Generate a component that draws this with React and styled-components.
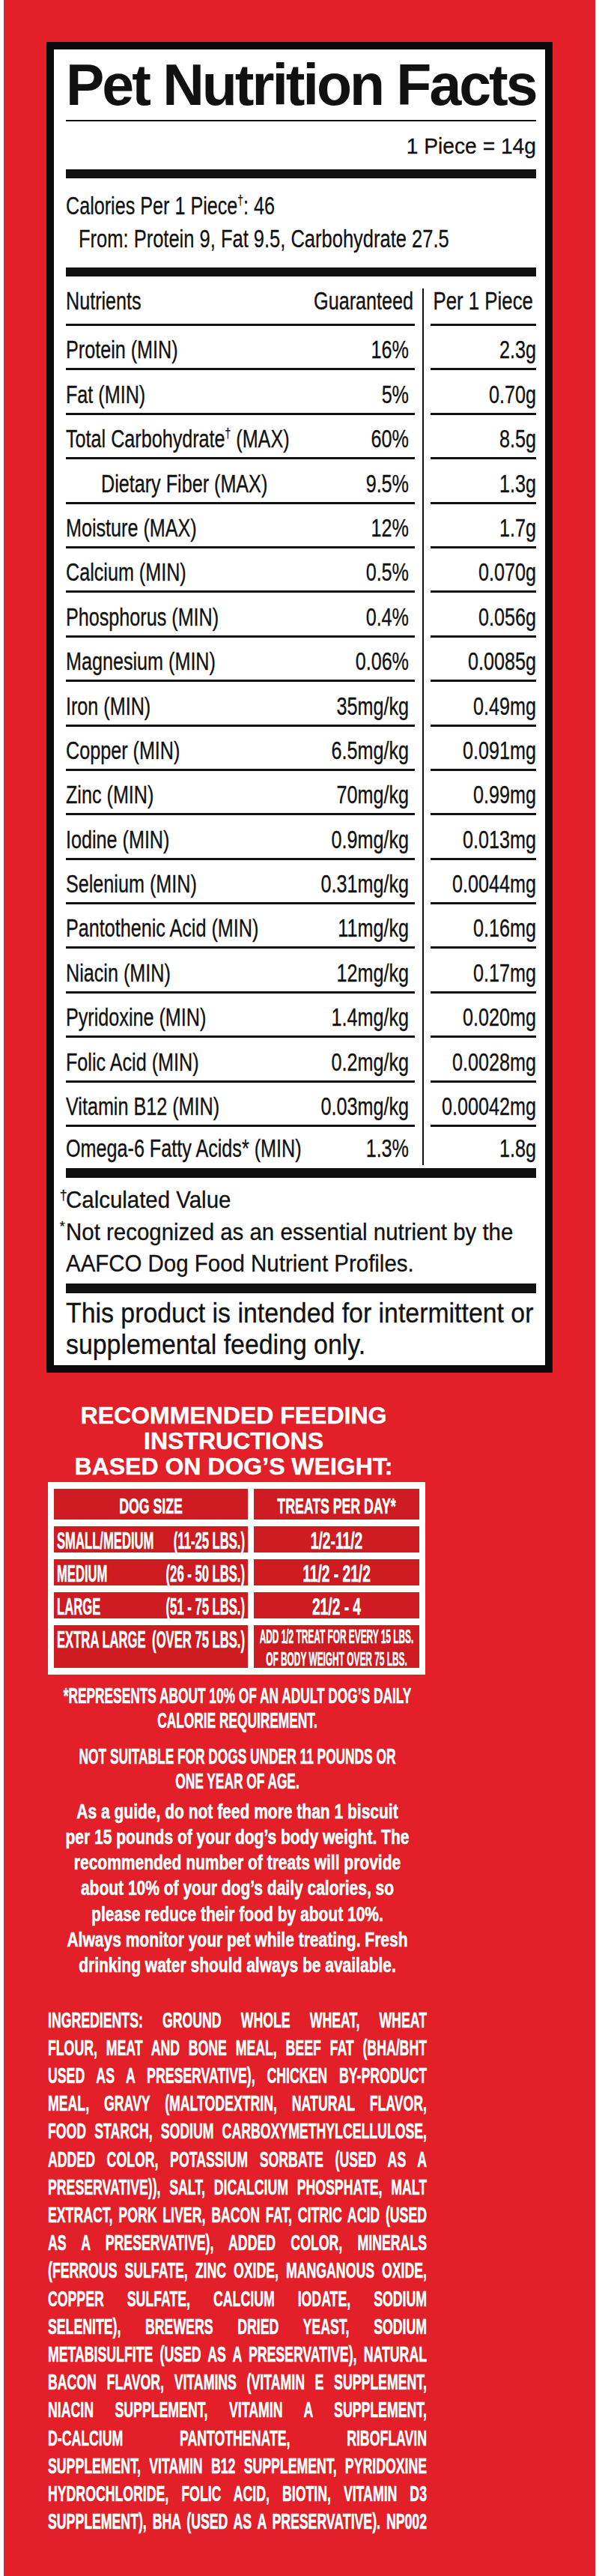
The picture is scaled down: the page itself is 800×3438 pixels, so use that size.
import React from "react";
import styled, { createGlobalStyle } from "styled-components";

const GlobalStyle = createGlobalStyle`
  html, body {
    margin: 0;
    padding: 0;
    background: #fff;
  }
  body {
    font-family: "Liberation Sans", Arial, sans-serif;
  }
`;

const Page = styled.div`
  margin: 0 5px;
  min-height: 3438px;
  box-sizing: border-box;
  padding-top: 56px;
  background: #e3202a;
  overflow: hidden;
`;

const Label = styled.section`
  margin-left: 57px;
  width: 676px;
  box-sizing: border-box;
  border: 10px solid #0b0b0b;
  padding: 9px 12px 6px 16px;
  background: #fff;
  color: #111;
`;

const Title = styled.h1`
  margin: 0;
  font-size: 77px;
  line-height: 77px;
  font-weight: 700;
  letter-spacing: -3px;
  white-space: nowrap;
`;

const Rule = styled.div`
  height: ${p => p.$h}px;
  margin-top: ${p => p.$mt || 0}px;
  background: #111;
`;

// condensed type: the label uses a narrow face, so the text is squeezed
const Fit = styled.div`
  width: ${p => 100 / p.$x}%;
  transform: scaleX(${p => p.$x});
  transform-origin: left center;
  white-space: ${p => (p.$wrap ? "normal" : "nowrap")};
  text-align: ${p => p.$align || "left"};
  text-align-last: ${p => (p.$align === "justify" ? "justify" : "auto")};
`;

const FitRow = styled(Fit)`
  display: flex;
  justify-content: ${p => p.$justify || "space-between"};
  align-items: baseline;
`;

const Line = styled.div`
  margin-top: ${p => p.$mt || 0}px;
  padding-left: ${p => p.$indent || 0}px;
  font-size: ${p => p.$size}px;
  line-height: ${p => p.$lh}px;
  -webkit-text-stroke: 0.3px #111;
`;

const Sup = styled.sup`
  font-size: 0.55em;
  line-height: 0;
  vertical-align: 0.7em;
`;

const Mark = styled.span`
  display: inline-block;
  width: 9px;
  margin-left: -9px;
  font-size: 0.6em;
  line-height: 0;
  vertical-align: 0.6em;
`;

const Row = styled.div`
  display: grid;
  grid-template-columns: 466px 21px 141px;
  height: ${p => p.$h}px;
  font-size: 34px;
  line-height: 34px;
  -webkit-text-stroke: 0.35px #111;
`;

const Cell = styled.div`
  display: flex;
  flex-direction: column;
  justify-content: flex-end;
  box-sizing: border-box;
  padding: 0 ${p => p.$pr || 0}px ${p => p.$pb}px ${p => p.$pl || 0}px;
  border-bottom: ${p => (p.$ruled ? "3px solid #111" : "none")};
`;

const Divider = styled.div`
  background: linear-gradient(#111, #111) no-repeat center ${p => p.$top || 0}px /
    2px calc(100% - ${p => (p.$top || 0) + (p.$bottom || 0)}px);
`;

const Lower = styled.div`
  margin-left: 59px;
  width: 506px;
  color: #fff;
  font-weight: 700;
  text-shadow: 0 0 2px rgba(110, 0, 0, 0.7);
  -webkit-text-stroke: 0.7px #fff;
`;

const Heading = styled.h2`
  margin: 40px 0 0;
  padding-right: 10px;
  font-size: 32px;
  line-height: 34px;
  font-weight: 700;
  text-align: center;
  -webkit-text-stroke: 0.5px #fff;
`;

const FeedTable = styled.div`
  margin-top: 4px;
  width: 504px;
  box-sizing: border-box;
  padding: 9px 8px;
  display: grid;
  grid-template-columns: 259px 221px;
  gap: 9px 8px;
  background: #fff;
`;

const FeedCell = styled.div`
  height: ${p => p.$h}px;
  box-sizing: border-box;
  padding: ${p => p.$pt || 0}px 4px 0;
  background: #cf1b22;
  font-size: ${p => p.$size || 32}px;
  line-height: ${p => p.$lh || 33}px;
`;

const Block = styled.div`
  margin-top: ${p => p.$mt}px;
  font-size: ${p => p.$size}px;
  line-height: ${p => p.$lh}px;
`;

const nutrients = [
  ["Protein (MIN)", "16%", "2.3g"],
  ["Fat (MIN)", "5%", "0.70g"],
  [<>Total Carbohydrate<Sup>†</Sup> (MAX)</>, "60%", "8.5g"],
  ["Dietary Fiber (MAX)", "9.5%", "1.3g", 47],
  ["Moisture (MAX)", "12%", "1.7g"],
  ["Calcium (MIN)", "0.5%", "0.070g"],
  ["Phosphorus (MIN)", "0.4%", "0.056g"],
  ["Magnesium (MIN)", "0.06%", "0.0085g"],
  ["Iron (MIN)", "35mg/kg", "0.49mg"],
  ["Copper (MIN)", "6.5mg/kg", "0.091mg"],
  ["Zinc (MIN)", "70mg/kg", "0.99mg"],
  ["Iodine (MIN)", "0.9mg/kg", "0.013mg"],
  ["Selenium (MIN)", "0.31mg/kg", "0.0044mg"],
  ["Pantothenic Acid (MIN)", "11mg/kg", "0.16mg"],
  ["Niacin (MIN)", "12mg/kg", "0.17mg"],
  ["Pyridoxine (MIN)", "1.4mg/kg", "0.020mg"],
  ["Folic Acid (MIN)", "0.2mg/kg", "0.0028mg"],
  ["Vitamin B12 (MIN)", "0.03mg/kg", "0.00042mg"],
];

const feeding = [
  ["SMALL/MEDIUM", "(11-25 LBS.)", "1/2-11/2"],
  ["MEDIUM", "(26 - 50 LBS.)", "11/2 - 21/2"],
  ["LARGE", "(51 - 75 LBS.)", "21/2 - 4"],
];

const ingredients = [
  "INGREDIENTS: GROUND WHOLE WHEAT, WHEAT",
  "FLOUR, MEAT AND BONE MEAL, BEEF FAT (BHA/BHT",
  "USED AS A PRESERVATIVE), CHICKEN BY-PRODUCT",
  "MEAL, GRAVY (MALTODEXTRIN, NATURAL FLAVOR,",
  "FOOD STARCH, SODIUM CARBOXYMETHYLCELLULOSE,",
  "ADDED COLOR, POTASSIUM SORBATE (USED AS A",
  "PRESERVATIVE)), SALT, DICALCIUM PHOSPHATE, MALT",
  "EXTRACT, PORK LIVER, BACON FAT, CITRIC ACID (USED",
  "AS A PRESERVATIVE), ADDED COLOR, MINERALS",
  "(FERROUS SULFATE, ZINC OXIDE, MANGANOUS OXIDE,",
  "COPPER SULFATE, CALCIUM IODATE, SODIUM",
  "SELENITE), BREWERS DRIED YEAST, SODIUM",
  "METABISULFITE (USED AS A PRESERVATIVE), NATURAL",
  "BACON FLAVOR, VITAMINS (VITAMIN E SUPPLEMENT,",
  "NIACIN SUPPLEMENT, VITAMIN A SUPPLEMENT,",
  "D-CALCIUM PANTOTHENATE, RIBOFLAVIN",
  "SUPPLEMENT, VITAMIN B12 SUPPLEMENT, PYRIDOXINE",
  "HYDROCHLORIDE, FOLIC ACID, BIOTIN, VITAMIN D3",
  "SUPPLEMENT), BHA (USED AS A PRESERVATIVE). NP002",
];

const guide = [
  "As a guide, do not feed more than 1 biscuit",
  "per 15 pounds of your dog’s body weight. The",
  "recommended number of treats will provide",
  "about 10% of your dog’s daily calories, so",
  "please reduce their food by about 10%.",
  "Always monitor your pet while treating. Fresh",
  "drinking water should always be available.",
];

const NutrientRow = ({ name, guaranteed, perPiece, indent, last }) => (
  <Row $h={last ? 55 : 59.4}>
    <Cell $ruled={!last} $pb={last ? 10 : 8} $pr={8} $pl={indent}>
      <FitRow $x={0.74}>
        <span>{name}</span>
        <span>{guaranteed}</span>
      </FitRow>
    </Cell>
    <Divider $bottom={last ? 4 : 0} />
    <Cell $ruled={!last} $pb={last ? 10 : 8}>
      <FitRow $x={0.74} $justify="flex-end">
        <span>{perPiece}</span>
      </FitRow>
    </Cell>
  </Row>
);

const App = () => {
  return (
    <Page>
      <GlobalStyle />
      <Label>
        <Title>Pet Nutrition Facts</Title>
        <Rule $h={2} $mt={8} />
        <Line $size={30} $lh={30} $mt={18}>
          <Fit $x={0.94} $align="right">1 Piece = 14g</Fit>
        </Line>
        <Rule $h={12} $mt={16} />
        <Line $size={34} $lh={34} $mt={19}>
          <Fit $x={0.74}>
            Calories Per 1 Piece<Sup>†</Sup>: 46
          </Fit>
        </Line>
        <Line $size={34} $lh={34} $mt={10} $indent={17}>
          <Fit $x={0.75}>From: Protein 9, Fat 9.5, Carbohydrate 27.5</Fit>
        </Line>
        <Rule $h={12} $mt={22} />

        <Row $h={66}>
          <Cell $ruled $pb={14} $pr={2}>
            <FitRow $x={0.74}>
              <span>Nutrients</span>
              <span>Guaranteed</span>
            </FitRow>
          </Cell>
          <Divider $top={16} />
          <Cell $ruled $pb={14} $pr={4}>
            <FitRow $x={0.76} $justify="flex-end">
              <span>Per 1 Piece</span>
            </FitRow>
          </Cell>
        </Row>
        {nutrients.map(([name, g, v, indent], i) => (
          <NutrientRow key={i} name={name} guaranteed={g} perPiece={v} indent={indent} />
        ))}
        <NutrientRow
          last
          name={<>Omega-6 Fatty Acids* (MIN)</>}
          guaranteed="1.3%"
          perPiece="1.8g"
        />
        <Rule $h={13} />

        <Line $size={32} $lh={42.5} $mt={8}>
          <Fit $x={0.92}>
            <Mark>†</Mark>Calculated Value
          </Fit>
        </Line>
        <Line $size={32} $lh={42.5}>
          <Fit $x={0.92}>
            <Mark>*</Mark>Not recognized as an essential nutrient by the
          </Fit>
        </Line>
        <Line $size={32} $lh={42.5}>
          <Fit $x={0.92}>AAFCO Dog Food Nutrient Profiles.</Fit>
        </Line>
        <Rule $h={13} $mt={5} />
        <Line $size={36} $lh={42} $mt={6}>
          <Fit $x={0.94}>This product is intended for intermittent or</Fit>
          <Fit $x={0.94}>supplemental feeding only.</Fit>
        </Line>
      </Label>

      <Lower>
        <Heading>
          RECOMMENDED FEEDING
          <br />
          INSTRUCTIONS
          <br />
          BASED ON DOG’S WEIGHT:
        </Heading>

        <FeedTable>
          <FeedCell $h={41} $size={30} $lh={41} $pt={2}>
            <Fit $x={0.59} $align="center">DOG SIZE</Fit>
          </FeedCell>
          <FeedCell $h={41} $size={30} $lh={41} $pt={2}>
            <Fit $x={0.59} $align="center">TREATS PER DAY*</Fit>
          </FeedCell>
          {feeding.map(([size, weight, treats]) => (
            <React.Fragment key={size}>
              <FeedCell $h={35} $pt={3}>
                <FitRow $x={0.52}>
                  <span>{size}</span>
                  <span>{weight}</span>
                </FitRow>
              </FeedCell>
              <FeedCell $h={35} $pt={3}>
                <Fit $x={0.6} $align="center">{treats}</Fit>
              </FeedCell>
            </React.Fragment>
          ))}
          <FeedCell $h={57} $pt={3}>
            <FitRow $x={0.52}>
              <span>EXTRA LARGE</span>
              <span>(OVER 75 LBS.)</span>
            </FitRow>
          </FeedCell>
          <FeedCell $h={57} $size={25} $lh={30}>
            <Fit $x={0.475} $align="center">ADD 1/2 TREAT FOR EVERY 15 LBS.</Fit>
            <Fit $x={0.475} $align="center">OF BODY WEIGHT OVER 75 LBS.</Fit>
          </FeedCell>
        </FeedTable>

        <Block $mt={11} $size={30} $lh={33}>
          <Fit $x={0.577} $align="center">
            *REPRESENTS ABOUT 10% OF AN ADULT DOG’S DAILY
          </Fit>
          <Fit $x={0.577} $align="center">CALORIE REQUIREMENT.</Fit>
        </Block>
        <Block $mt={15} $size={30} $lh={33}>
          <Fit $x={0.577} $align="center">NOT SUITABLE FOR DOGS UNDER 11 POUNDS OR</Fit>
          <Fit $x={0.577} $align="center">ONE YEAR OF AGE.</Fit>
        </Block>
        <Block $mt={8} $size={28} $lh={34.3}>
          {guide.map(text => (
            <Fit key={text} $x={0.75} $align="center">
              {text}
            </Fit>
          ))}
        </Block>
        <Block $mt={36} $size={30} $lh={37.2}>
          {ingredients.map(text => (
            <Fit key={text} $x={0.59} $align="justify" $wrap>
              {text}
            </Fit>
          ))}
        </Block>
      </Lower>
    </Page>
  );
};

export default App;
